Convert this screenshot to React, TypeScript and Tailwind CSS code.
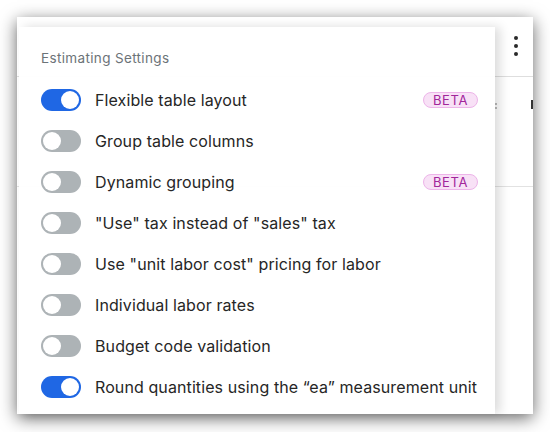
import React from "react";

const rows: { label: string; on: boolean; beta?: boolean }[] = [
  { label: "Flexible table layout", on: true, beta: true },
  { label: "Group table columns", on: false },
  { label: "Dynamic grouping", on: false, beta: true },
  { label: "\"Use\" tax instead of \"sales\" tax", on: false },
  { label: "Use \"unit labor cost\" pricing for labor", on: false },
  { label: "Individual labor rates", on: false },
  { label: "Budget code validation", on: false },
  { label: "Round quantities using the \u201Cea\u201D measurement unit", on: true },
];

function Toggle({ on }: { on: boolean }) {
  return (
    <div
      className={
        "relative w-10 h-[22px] rounded-full shrink-0 " +
        (on ? "bg-[#1f67e4]" : "bg-[#adb3b6]")
      }
    >
      <div
        className={
          "absolute top-[2px] w-[18px] h-[18px] rounded-full bg-white " +
          (on ? "right-[2px]" : "left-[2px]")
        }
      />
    </div>
  );
}

export default function App() {
  return (
    <div className="w-[550px] h-[432px] bg-white relative overflow-hidden" style={{ fontFamily: "Inter, 'Noto Sans', sans-serif" }}>
      <div className="absolute left-[17px] top-[17px] w-[516px] h-[397px] bg-white shadow-[0_4px_16px_rgba(0,0,0,0.6)]">
        {/* background page */}
        <div className="h-[60px] border-b border-[#dedede] flex justify-end items-start pt-[19px] pr-[15px]">
          <div className="flex flex-col gap-[4px]">
            <div className="w-[4px] h-[4px] rounded-full bg-[#2a2a2a]" />
            <div className="w-[4px] h-[4px] rounded-full bg-[#2a2a2a]" />
            <div className="w-[4px] h-[4px] rounded-full bg-[#2a2a2a]" />
          </div>
        </div>
        <div className="h-[110px] border-b border-[#e2e2e2] flex justify-end items-start pt-[23px]">
          <div className="w-[2px] h-[9px] bg-[#333]" />
        </div>
        <div className="absolute left-[478px] top-[86px] w-[2px] h-[6px] border-y-2 border-[#bbb]" />
        {/* popover */}
        <div className="absolute left-[2px] top-[10px] w-[476px] bottom-0 bg-white/95 shadow-[5px_0_10px_rgba(0,0,0,0.14)]">
          <div className="pl-[22px] pt-[21px] text-[13.5px] leading-[20px] tracking-[0.35px] text-[#6c7378]">
            Estimating Settings
          </div>
          <div className="mt-[11px] flex flex-col">
            {rows.map((r) => (
              <div key={r.label} className="h-[41px] flex items-center pl-[22px] pr-[17px]">
                <Toggle on={r.on} />
                <div className="ml-[14px] flex-1 text-[16px] tracking-[0.1px] text-[#262626] whitespace-nowrap">{r.label}</div>
                {r.beta && (
                  <div className="h-[16px] px-[9px] rounded-full bg-[#f8e1f6] border border-[#edb4e9] text-[#a1269a] text-[13px] leading-[14px] tracking-[0.6px] flex items-center">
                    BETA
                  </div>
                )}
              </div>
            ))}
          </div>
        </div>
      </div>
    </div>
  );
}
